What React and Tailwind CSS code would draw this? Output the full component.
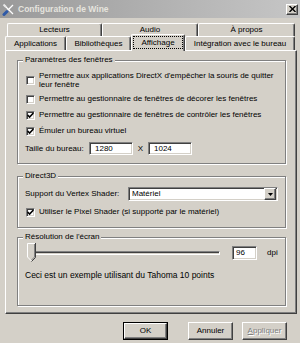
import React from 'react';

// classic win9x bevels
const raised =
  'border border-t-white border-l-white border-r-[#404040] border-b-[#404040] shadow-[inset_-1px_-1px_0_#808080]';
const sunken =
  'border border-t-[#808080] border-l-[#808080] border-r-white border-b-white shadow-[inset_1px_1px_0_#404040,inset_-1px_-1px_0_#d4d0c8]';

function WineIcon() {
  return (
    <svg width="13" height="13" viewBox="0 0 13 13" className="shrink-0">
      <path d="M2.5 2.5 L11 11" stroke="white" strokeWidth="1.3" />
      <path d="M11 2 L5.5 7.5" stroke="white" strokeWidth="1.3" />
      <path d="M1.5 1.5 L4 4" stroke="#e8e8e8" strokeWidth="2" />
      <path d="M2 11.5 L5 8.5" stroke="#2f5aa8" strokeWidth="3" strokeLinecap="round" />
    </svg>
  );
}

function Checkbox({ checked }) {
  return (
    <span className={`w-[9px] h-[9px] shrink-0 bg-white flex items-center justify-center ${sunken}`}>
      {checked && (
        <svg width="7" height="7" viewBox="0 0 7 7">
          <path d="M0.6 3 L2.6 5 L6.4 1" stroke="black" strokeWidth="1.6" fill="none" />
        </svg>
      )}
    </span>
  );
}

function CheckRow({ checked, className, children }) {
  return (
    <div className={`flex items-center gap-[4px] pl-[8px] ${className}`}>
      <Checkbox checked={checked} />
      <span>{children}</span>
    </div>
  );
}

function Group({ title, className, children }) {
  return (
    <div className={`flex flex-col border border-[#808080] shadow-[inset_1px_1px_0_white,1px_1px_0_white] ${className}`}>
      <div className="-mt-[6px] ml-[5px] h-[10px] leading-[10px] w-fit px-[2px] bg-[#d4d0c8]">{title}</div>
      {children}
    </div>
  );
}

function BackTab({ className, children }) {
  return (
    <div
      className={`h-full flex items-center justify-center border-t border-l border-r border-t-white border-l-white border-r-[#404040] shadow-[inset_-1px_0_0_#808080] rounded-t-[2px] ${className}`}
    >
      {children}
    </div>
  );
}

function Button({ isDefault, disabled, children }) {
  const face = (
    <div className={`w-full h-full flex items-center justify-center ${raised}`}>
      <span className={disabled ? 'text-[#808080] [text-shadow:1px_1px_0_white]' : ''}>{children}</span>
    </div>
  );
  if (isDefault) {
    return <div className="w-[45px] h-[18px] border border-black">{face}</div>;
  }
  return <div className="w-[45px] h-[18px]">{face}</div>;
}

export default function App() {
  return (
    <div className="w-[300px] h-[343px] overflow-hidden bg-[#d4d0c8] text-black text-[8px] leading-[10px] font-['Liberation_Sans',Arial,sans-serif] flex flex-col">
      {/* title bar */}
      <div className="h-[18px] shrink-0 flex items-center pl-[2px] pr-[2px] bg-linear-to-r from-[#9a9a9a] to-[#c6c6c6]">
        <WineIcon />
        <span className="ml-[3px] font-bold text-[8.5px] text-[#e6e4de]">Configuration de Wine</span>
        <div className={`ml-auto w-[12px] h-[11px] bg-[#d4d0c8] flex items-center justify-center ${raised}`}>
          <svg width="7" height="6" viewBox="0 0 7 6">
            <path d="M0.5 0 L6.5 6 M6.5 0 L0.5 6" stroke="black" strokeWidth="1.4" />
          </svg>
        </div>
      </div>

      {/* tabs, back row */}
      <div className="mt-[5px] h-[13px] flex pl-[7px]">
        <BackTab className="w-[95px]">Lecteurs</BackTab>
        <BackTab className="w-[96px]">Audio</BackTab>
        <BackTab className="w-[97px]">À propos</BackTab>
      </div>

      {/* tabs, front row */}
      <div className="h-[14px] flex items-end pl-[5px]">
        <BackTab className="w-[61px]">Applications</BackTab>
        <BackTab className="w-[65px]">Bibliothèques</BackTab>
        <div className="relative z-10 w-[54px] h-[17px] -mb-[1px] bg-[#d4d0c8] flex items-center justify-center border-t border-l border-r border-t-white border-l-white border-r-[#404040] shadow-[inset_-1px_0_0_#808080] rounded-t-[2px]">
          <span className="w-[50px] h-[13px] -mt-[1px] flex items-center justify-center border border-dotted border-black">
            Affichage
          </span>
        </div>
        <BackTab className="w-[110px]">Intégration avec le bureau</BackTab>
      </div>

      {/* page */}
      <div className={`ml-[5px] w-[292px] h-[264px] shrink-0 flex flex-col pl-[11px] pt-[9px] ${raised}`}>
        <Group title="Paramètres des fenêtres" className="w-[269px] h-[104px]">
          <CheckRow className="mt-[7px] leading-[8.5px]">
            Permettre aux applications DirectX d'empêcher la souris de quitter
            <br />
            leur fenêtre
          </CheckRow>
          <CheckRow className="mt-[5px] h-[10px]">Permettre au gestionnaire de fenêtres de décorer les fenêtres</CheckRow>
          <CheckRow checked className="mt-[6px] h-[10px]">
            Permettre au gestionnaire de fenêtres de contrôler les fenêtres
          </CheckRow>
          <CheckRow checked className="mt-[6px] h-[10px]">
            Émuler un bureau virtuel
          </CheckRow>
          <div className="mt-[6px] h-[13px] flex items-center pl-[7px]">
            <span className="w-[64px]">Taille du bureau:</span>
            <div className={`w-[44px] h-[13px] bg-white flex items-center pl-[5px] ${sunken}`}>1280</div>
            <span className="w-[15px] text-center">X</span>
            <div className={`w-[44px] h-[13px] bg-white flex items-center pl-[5px] ${sunken}`}>1024</div>
          </div>
        </Group>

        <Group title="Direct3D" className="mt-[12px] w-[269px] h-[52px]">
          <div className="mt-[6px] h-[14px] flex items-center pl-[7px]">
            <span className="w-[103px]">Support du Vertex Shader:</span>
            <div className={`w-[150px] h-[14px] bg-white flex items-center pl-[3px] pr-px ${sunken}`}>
              <span>Matériel</span>
              <div className={`ml-auto w-[12px] h-[12px] bg-[#d4d0c8] flex items-center justify-center ${raised}`}>
                <svg width="5" height="3" viewBox="0 0 5 3">
                  <path d="M0 0 H5 L2.5 3 Z" fill="black" />
                </svg>
              </div>
            </div>
          </div>
          <CheckRow checked className="mt-[6px] h-[10px]">
            Utiliser le Pixel Shader (si supporté par le matériel)
          </CheckRow>
        </Group>

        <Group title="Résolution de l'écran" className="mt-[9px] w-[269px] h-[69px]">
          <div className="mt-[1px] h-[19px] flex items-center pl-[9px]">
            <div className="relative w-[195px] h-[19px] flex items-center">
              <div className="ml-[5px] w-[188px] h-[4px] border border-t-[#808080] border-l-[#808080] border-r-white border-b-white shadow-[inset_1px_1px_0_#404040]" />
              <svg width="9" height="19" viewBox="0 0 9 19" className="absolute left-0 top-0">
                <path d="M0.5 0.5 H8.5 V14.5 L4.5 18.5 L0.5 14.5 Z" fill="#d4d0c8" />
                <path d="M4.5 18 L0.5 14 V0.5 H8" stroke="white" fill="none" />
                <path d="M8.5 0 V14.5 L4.5 18.5" stroke="#404040" fill="none" />
                <path d="M7.5 1 V14 L4.5 17" stroke="#808080" fill="none" />
              </svg>
            </div>
            <div className={`ml-[10px] w-[25px] h-[14px] bg-white flex items-center pl-[3px] ${sunken}`}>96</div>
            <span className="ml-[10px]">dpi</span>
          </div>
          <div className="mt-[7px] pl-[7px] text-[8.5px] leading-[12px]">
            Ceci est un exemple utilisant du Tahoma 10 points
          </div>
        </Group>
      </div>

      {/* buttons */}
      <div className="mt-[8px] h-[18px] flex">
        <div className="ml-[123px]">
          <Button isDefault>OK</Button>
        </div>
        <div className="ml-[20px]">
          <Button>Annuler</Button>
        </div>
        <div className="ml-[9px] w-[46px]">
          <Button disabled>
            <span className="underline">A</span>ppliquer
          </Button>
        </div>
      </div>
    </div>
  );
}
